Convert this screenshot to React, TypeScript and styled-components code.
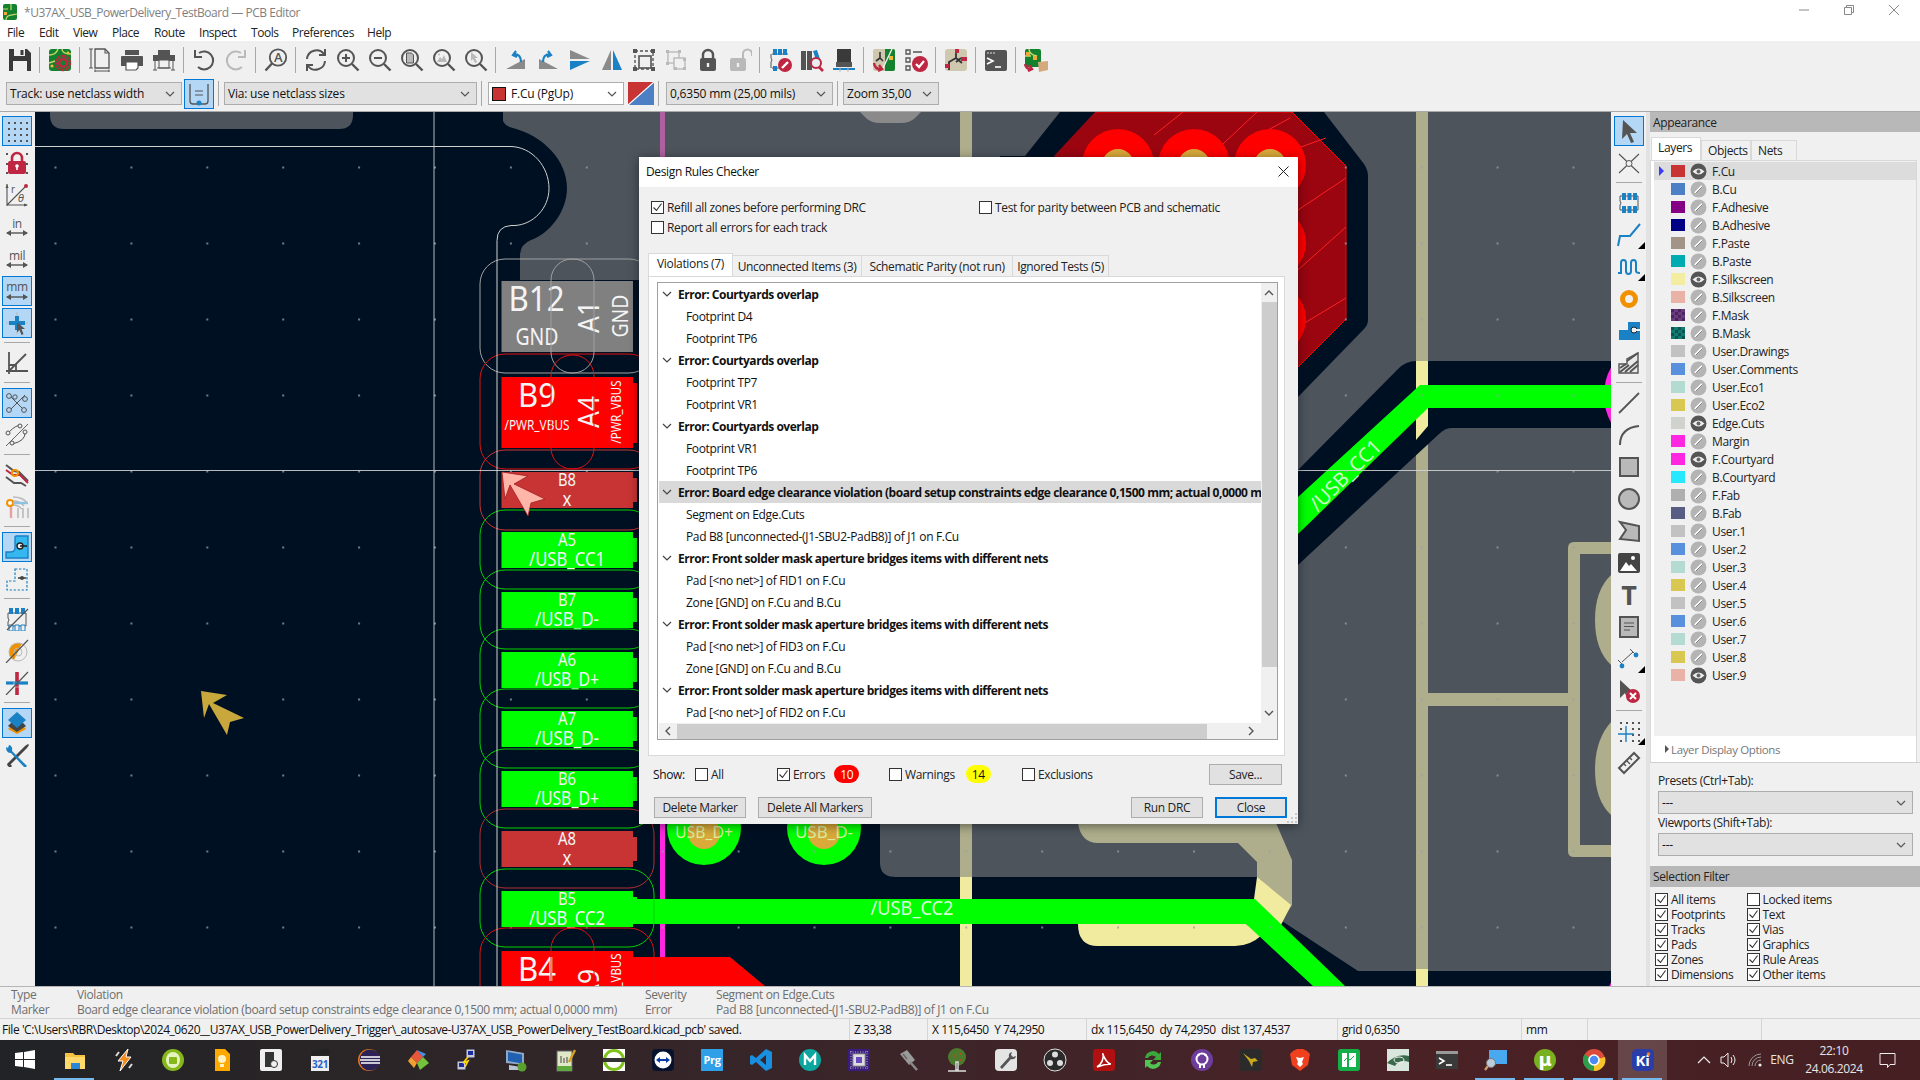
import React from 'react'
import styled, { createGlobalStyle } from 'styled-components'

const UI = `"Open Sans", "Noto Sans", sans-serif`
const D = '#545454'
const B = '#1a81c4'
const R = '#bf2641'
const O = '#f29100'
const L = '#b9b9b9'

const GlobalStyle = createGlobalStyle`
html, body { margin: 0; padding: 0; background: #f0f0f0; overflow: hidden; }
#root { width: 1920px; height: 1080px; }
* { box-sizing: border-box; }
`

const Root = styled.div`
position: relative;
display: flex;
flex-direction: column;
width: 1920px;
height: 1080px;
overflow: hidden;
font-family: ${UI};
font-size: 12px;
letter-spacing: -0.35px;
color: #111;
`
const TitleBar = styled.div`
display: flex;
align-items: center;
height: 24px;
background: #fff;
color: #7f7f7f;
padding: 0 4px 0 3px;
letter-spacing: -0.46px;
`
const AppLogo = styled.div`
display: flex;
margin-right: 7px;
`
const WinControls = styled.div`
display: flex;
margin-left: auto;
`
const WinControl = styled.div`
display: flex;
align-items: center;
justify-content: center;
width: 45px;
height: 20px;
margin-top: -4px;
`
const MenuBar = styled.div`
display: flex;
align-items: center;
height: 17px;
background: #fff;
padding-left: 7px;
letter-spacing: -0.45px;
`
const MenuItem = styled.span<{ $w: number }>`
width: ${p => p.$w}px;
font-size: 12px;
color: #222;
`
const TopToolbar = styled.div`
display: flex;
align-items: center;
height: 37px;
padding: 0 0 0 4px;
background: #f0f0f0;
`
const ToolBtn = styled.div<{ $active?: boolean; $corner?: boolean }>`
position: relative;
flex: none;
display: flex;
align-items: center;
justify-content: center;
width: ${p => (p.$active ? 30 : 32)}px;
height: ${p => (p.$active ? 30 : 32)}px;
margin: ${p => (p.$active ? '1px' : '0')};
${p => p.$active && `
  background: #b3d7f5;
  border: 1px solid #0078d7;
`}
${p => p.$corner && `
  &::after {
    content: '';
    position: absolute;
    right: 0;
    bottom: 2px;
    border-left: 7px solid transparent;
    border-bottom: 7px solid #000;
  }
`}
`
const SepV = styled.div`
flex: none;
width: 1px;
height: 26px;
margin: 0 4px 0 3px;
background: #a8a8a8;
`
const SepH = styled.div`
flex: none;
width: 26px;
height: 1px;
margin: 3px 0 4px 3px;
background: #a8a8a8;
`
const ComboBar = styled.div`
display: flex;
align-items: center;
height: 33px;
padding-left: 6px;
padding-bottom: 2px;
background: #f0f0f0;
`
const Combo = styled.div<{ $w?: number; $white?: boolean }>`
display: flex;
align-items: center;
flex: none;
width: ${p => (p.$w ? `${p.$w}px` : '100%')};
height: 23px;
padding: 0 6px 0 3px;
background: ${p => (p.$white ? '#fff' : '#e1e1e1')};
border: 1px solid #adadad;
color: #111;
letter-spacing: -0.2px;
svg:last-child { margin-left: auto; }
`
const LayerSwatch = styled.span`
width: 14px;
height: 14px;
margin-right: 5px;
background: #c83434;
border: 1px solid #111;
`
const PairBtn = styled.div`
display: flex;
flex: none;
margin: 0 0 0 4px;
`
const ToggleBox = styled.div`
display: flex;
align-items: center;
justify-content: center;
flex: none;
width: 30px;
height: 30px;
margin-left: 2px;
background: #b3d7f5;
border: 1px solid #0078d7;
`
const BarSep = styled.div<{ $r?: number }>`
flex: none;
width: 1px;
height: 25px;
margin: 0 ${p => p.$r ?? 5}px 0 4px;
background: #a8a8a8;
`
const Main = styled.div`
display: flex;
height: 875px;
border-top: 1px solid #a9a9a9;
`
const SideToolbar = styled.div<{ $pad: number }>`
display: flex;
flex-direction: column;
flex: none;
width: 35px;
padding-top: 3px;
padding-left: ${p => p.$pad}px;
background: #f0f0f0;
`
const CanvasPane = styled.div`
flex: none;
width: 1576px;
height: 874px;
background: #001023;
svg { display: block; }
`
const Sash = styled.div`
flex: none;
width: 4px;
background: #e2e2e2;
`
const RightPanel = styled.div`
display: flex;
flex-direction: column;
flex: none;
width: 270px;
background: #f0f0f0;
`
const PanelHead = styled.div<{ $h: number }>`
display: flex;
align-items: center;
flex: none;
height: ${p => p.$h}px;
padding-left: 3px;
background: #b8b8b8;
color: #222;
`
const PanelTabs = styled.div`
display: flex;
align-items: flex-end;
height: 28px;
padding: 0 0 0 1px;
`
const PanelTab = styled.div<{ $w: number; $on?: boolean }>`
display: flex;
align-items: center;
width: ${p => p.$w}px;
height: ${p => (p.$on ? 23 : 20)}px;
padding: 0 0 ${p => (p.$on ? 3 : 0)}px 6px;
background: ${p => (p.$on ? '#fff' : '#f0f0f0')};
border: 1px solid #d9d9d9;
border-bottom: none;
color: #222;
`
const LayerBox = styled.div`
display: flex;
flex-direction: column;
height: 602px;
margin-right: 3px;
padding: 0 0 0 3px;
background: #fff;
border-left: 1px solid #d9d9d9;
border-top: 1px solid #d9d9d9;
border-right: 1px solid #d9d9d9;
`
const LayerList = styled.div`
flex: none;
height: 575px;
background: #f0f0f0;
padding-top: 1px;
`
const LayerRow = styled.div<{ $sel?: boolean }>`
display: flex;
align-items: center;
height: 18px;
background: ${p => (p.$sel ? '#dcdcdc' : 'transparent')};
`
const LayerMark = styled.span<{ $on?: boolean }>`
flex: none;
width: 6px;
margin: 0 6px 0 5px;
height: 0;
border-top: 5px solid transparent;
border-bottom: 5px solid transparent;
border-left: 5px solid ${p => (p.$on ? '#3a3aff' : 'transparent')};
`
const Swatch = styled.span<{ $c: string; $c2?: string }>`
flex: none;
width: 14px;
height: 12px;
background: ${p => (p.$c2 ? `repeating-conic-gradient(${p.$c} 0 25%, ${p.$c2} 0 50%) 0 0 / 7px 6px` : p.$c)};
`
const EyeSlot = styled.span`
display: flex;
flex: none;
margin-left: 5px;
`
const LayerName = styled.span`
margin-left: 5px;
color: #222;
`
const DisplayOptions = styled.div`
display: flex;
align-items: center;
flex: 1;
padding-left: 11px;
color: #777;
font-size: 11.5px;
`
const SmallArrow = styled.span`
width: 0;
height: 0;
margin-right: 2px;
border-top: 4px solid transparent;
border-bottom: 4px solid transparent;
border-left: 4px solid #555;
`
const PresetBox = styled.div`
flex: none;
height: 104px;
padding: 11px 7px 0 8px;
border-top: 1px solid #d0d0d0;
`
const PresetLabel = styled.div`
height: 17px;
line-height: 14px;
color: #222;
`
const PresetGap = styled.div`
height: 2px;
`
const FilterGrid = styled.div`
display: grid;
grid-template-columns: 91.5px 1fr;
grid-auto-rows: 15px;
padding: 5px 0 0 5px;
`
const CheckLabel = styled.label`
display: flex;
align-items: center;
gap: 3px;
color: #222;
white-space: nowrap;
`
const Box = styled.span`
display: flex;
align-items: center;
justify-content: center;
flex: none;
width: 13px;
height: 13px;
background: #fff;
border: 1px solid #333;
`
const MessagePanel = styled.div`
display: flex;
height: 32px;
padding: 0 0 0 11px;
background: #f0f0f0;
border-top: 1px solid #b5b5b5;
color: #6e6e6e;
`
const MsgCol = styled.div<{ $w: number }>`
width: ${p => p.$w}px;
line-height: 15px;
white-space: nowrap;
`
const StatusBar = styled.div`
display: flex;
align-items: stretch;
height: 22px;
border-top: 1px solid #d5d5d5;
background: #f0f0f0;
letter-spacing: -0.44px;
`
const StatusCell = styled.div<{ $w?: number; $pad?: number }>`
display: flex;
align-items: center;
flex: none;
width: ${p => (p.$w ? `${p.$w}px` : 'auto')};
padding-left: ${p => p.$pad ?? 4}px;
border-right: 1px solid #d5d5d5;
white-space: pre;
overflow: hidden;
`
const Taskbar = styled.div`
display: flex;
height: 40px;
background: linear-gradient(90deg, #212326 0%, #2b2527 20%, #3b2529 45%, #4a2226 75%, #451f22 100%);
color: #e6e6e6;
`
const StartBtn = styled.div`
display: flex;
align-items: center;
justify-content: center;
flex: none;
width: 50px;
`
const TaskIcon = styled.div<{ $open?: boolean; $cur?: boolean }>`
position: relative;
display: flex;
align-items: center;
justify-content: center;
flex: none;
width: 49px;
background: ${p => (p.$cur ? 'rgba(255,255,255,0.17)' : 'transparent')};
${p => p.$open && `
  &::after {
    content: '';
    position: absolute;
    left: 4px;
    right: 5px;
    bottom: 0;
    height: 2px;
    background: #76b9ed;
  }
`}
`
const Tray = styled.div`
display: flex;
margin-left: auto;
padding-right: 18px;
`
const TraySlot = styled.div<{ $w: number }>`
display: flex;
flex-direction: column;
align-items: center;
justify-content: center;
width: ${p => p.$w}px;
font-size: 12px;
line-height: 18px;
`
const Dialog = styled.div`
position: absolute;
left: 639px;
top: 157px;
display: flex;
flex-direction: column;
width: 659px;
height: 667px;
background: #f0f0f0;
box-shadow: 0 2px 10px rgba(0, 0, 0, 0.45);
`
const DialogTitle = styled.div`
display: flex;
align-items: center;
justify-content: space-between;
height: 30px;
padding: 0 9px 2px 7px;
background: #fff;
color: #111;
`
const OptionGrid = styled.div`
display: grid;
grid-template-columns: 328px 1fr;
grid-auto-rows: 20px;
height: 50px;
padding: 10px 0 0 12px;
`
const TabRow = styled.div`
display: flex;
align-items: flex-end;
height: 23px;
margin-top: 16px;
padding-left: 9px;
`
const Tab = styled.div<{ $w: number; $on?: boolean }>`
display: flex;
align-items: center;
justify-content: center;
width: ${p => p.$w}px;
height: ${p => (p.$on ? 23 : 21)}px;
padding-bottom: ${p => (p.$on ? 3 : 0)}px;
background: ${p => (p.$on ? '#fff' : '#f0f0f0')};
border: 1px solid #d9d9d9;
border-bottom: none;
border-left: ${p => (p.$on ? '1px solid #d9d9d9' : 'none')};
white-space: nowrap;
color: #222;
`
const TabPane = styled.div`
height: 480px;
margin: 0 13px 0 9px;
padding: 5px 6px 15px 8px;
background: #fff;
border: 1px solid #d9d9d9;
`
const Tree = styled.div`
display: flex;
flex-direction: column;
height: 458px;
border: 1px solid #a0a0a0;
`
const TreeBody = styled.div`
display: flex;
height: 440px;
overflow: hidden;
`
const TreeRows = styled.div`
flex: none;
width: 602px;
margin-left: 1px;
overflow: hidden;
`
const TreeRow = styled.div<{ $head?: boolean; $sel?: boolean }>`
display: flex;
align-items: center;
height: 22px;
padding-left: ${p => (p.$head ? 3 : 27)}px;
background: ${p => (p.$sel ? '#d9d9d9' : 'transparent')};
font-weight: ${p => (p.$head ? 700 : 400)};
letter-spacing: ${p => (p.$head ? '-0.47px' : '-0.35px')};
white-space: nowrap;
color: #111;
svg { flex: none; margin-right: 6px; }
`
const VScroll = styled.div`
position: relative;
flex: none;
width: 17px;
background: #f0f0f0;
`
const VThumb = styled.div`
height: 365px;
margin: 19px 1px 0 1px;
background: #cdcdcd;
`
const ScrollArrowBox = styled.div<{ $top?: number; $bottom?: number }>`
position: absolute;
display: flex;
left: 3px;
${p => (p.$top !== undefined ? `top: ${p.$top}px;` : '')}
${p => (p.$bottom !== undefined ? `bottom: ${p.$bottom}px;` : '')}
`
const HScroll = styled.div`
display: flex;
align-items: center;
height: 16px;
margin-left: 1px;
padding-left: 5px;
background: #f0f0f0;
`
const HThumb = styled.div`
width: 530px;
height: 15px;
margin: 0 40px 0 5px;
background: #cdcdcd;
`
const ShowRow = styled.div`
display: flex;
align-items: center;
height: 22px;
margin-top: 7px;
padding: 0 16px 0 14px;
`
const ShowSlot = styled.div<{ $w: number }>`
display: flex;
align-items: center;
flex: none;
width: ${p => p.$w}px;
`
const Badge = styled.span<{ $bg: string; $fg: string; $ml: number }>`
display: flex;
align-items: center;
justify-content: center;
width: 25px;
height: 18px;
margin-left: ${p => p.$ml}px;
background: ${p => p.$bg};
color: ${p => p.$fg};
border-radius: 9px;
`
const ButtonRow = styled.div`
display: flex;
align-items: center;
gap: 12px;
height: 21px;
margin-top: 12px;
padding: 0 11px 0 15px;
`
const DlgButton = styled.div<{ $w: number; $main?: boolean; $auto?: boolean }>`
display: flex;
align-items: center;
justify-content: center;
flex: none;
width: ${p => p.$w}px;
height: 21px;
${p => p.$auto && 'margin-left: auto;'}
background: #e1e1e1;
border: ${p => (p.$main ? '2px solid #0078d7' : '1px solid #adadad')};
color: #222;
`
const Grip = styled.div`
position: absolute;
right: 1px;
bottom: 1px;
display: flex;
`

const Mag = ({ children }: { children?: React.ReactNode }) => (
    <>
        <circle cx="10" cy="10" r="8" fill="none" stroke={D} strokeWidth="2" />
        <path d="M16 16l6.5 6.5" stroke={D} strokeWidth="2.4" />
        {children}
    </>
)

const icons: Record<string, React.ReactNode> = {
    save: <><path d="M1 1h18l4 4v18H1z" fill="#3a3a3a" /><path d="M6 1h11v7H6z" fill="#f0f0f0" /><path d="M12.5 2h3v5h-3z" fill="#3a3a3a" /><path d="M5 13h14v10H5z" fill="#f0f0f0" /></>,
    board: <><rect x="1" y="1" width="22" height="22" rx="3" fill="#14812e" /><path d="M1 7c6 0 8-3 9-6M1 15l6-2M14 1c0 4 3 5 9 5" stroke="#c4d86a" strokeWidth="1.4" fill="none" /><circle cx="4" cy="18" r="1.6" fill="#f2b83a" /><circle cx="20" cy="5" r="1.4" fill="#f2b83a" /><circle cx="15" cy="15" r="7" fill="none" stroke={R} strokeWidth="2.6" strokeDasharray="2.2 1.2" /><circle cx="15" cy="15" r="3.8" fill="none" stroke={R} strokeWidth="2.6" /></>,
    page: <><path d="M7 1h10l4 4v15H7z" fill="none" stroke={D} strokeWidth="1.3" /><path d="M17 1v4h4M3 1v19M1 1h4M1 20h4M7 23h14M7 21.5v3M21 21.5v3" fill="none" stroke={D} strokeWidth="1.1" /></>,
    print: <><path d="M5 2h14v5H5z" fill={D} /><path d="M2 8h20q1 0 1 1v9h-5v-4H6v4H1V9q0-1 1-1z" fill={D} /><path d="M6 14h12v6l-2 2H6z" fill="#fff" stroke={D} strokeWidth="1.2" /></>,
    plot: <><path d="M6 2h12v5H6z" fill={D} /><path d="M1 7h22v6H1z" fill={D} /><path d="M7 12h10v8H7z" fill="#f0f0f0" stroke={D} /><path d="M3 13v9M21 13v9M1 22h4M19 22h4M5 20h14" fill="none" stroke={D} /></>,
    undo: <><path d="M7 5a9 9 0 1 1-1 14" fill="none" stroke={D} strokeWidth="2" /><path d="M3 2v7h7" fill="none" stroke={D} strokeWidth="2" /></>,
    redo: <><path d="M17 5a9 9 0 1 0 1 14" fill="none" stroke={L} strokeWidth="2" /><path d="M21 2v7h-7" fill="none" stroke={L} strokeWidth="2" /></>,
    find: <><circle cx="14" cy="9.5" r="8.2" fill="none" stroke={D} strokeWidth="1.8" /><path d="M8 15.5L1.5 22.5" stroke={D} strokeWidth="2.4" /><text x="14" y="14" textAnchor="middle" fontSize="13" fontFamily="Open Sans" fontWeight="600" fill={D}>A</text></>,
    refresh: <><path d="M3 11a9.5 9.5 0 0 1 17-5M21 13a9.5 9.5 0 0 1-17 5" fill="none" stroke={D} strokeWidth="2" /><path d="M21 1v6h-6M3 23v-6h6" fill="none" stroke={D} strokeWidth="2" /></>,
    zoomIn: <Mag><path d="M6 10h8M10 6v8" stroke={D} strokeWidth="2" /></Mag>,
    zoomOut: <Mag><path d="M6 10h8" stroke={D} strokeWidth="2" /></Mag>,
    zoomFit: <Mag><path d="M6.5 5h5l2 2v8h-7z" fill={L} stroke={D} strokeWidth="1" /></Mag>,
    zoomObj: <Mag><path d="M5 14l3-5 2 2 2-4 3 7z" fill={L} /><circle cx="7" cy="6.5" r="1" fill={L} /></Mag>,
    zoomSel: <Mag><path d="M7 4l7 6h-3l2 4-2 1-2-4-2 2z" fill={L} /></Mag>,
    rotCcw: <><path d="M2 21L21 11v10z" fill="#8a8a8a" /><path d="M12 3l-3 4 4 2M10 6c5 0 7 3 7 8" fill="none" stroke={B} strokeWidth="2.2" /></>,
    rotCw: <><path d="M22 21L3 11v10z" fill="#8a8a8a" /><path d="M12 3l3 4-4 2M14 6c-5 0-7 3-7 8" fill="none" stroke={B} strokeWidth="2.2" /></>,
    mirrorH: <><path d="M2 2l20 9H2z" fill="#8a8a8a" /><path d="M2 22l20-9H2z" fill={B} /></>,
    mirrorV: <><path d="M11 2v20H2z" fill="#8a8a8a" /><path d="M13 2v20h9z" fill={B} /></>,
    group: <><rect x="3" y="3" width="18" height="18" fill="none" stroke={D} strokeWidth="1.4" strokeDasharray="3 2" /><rect x="7" y="8" width="12" height="12" fill="#f0f0f0" stroke={D} strokeWidth="1.6" /><path d="M1 1h4v4H1zM19 1h4v4h-4zM1 19h4v4H1zM19 19h4v4h-4z" fill={D} /></>,
    ungroup: <><rect x="4" y="4" width="11" height="11" fill="none" stroke={L} strokeWidth="1.4" /><rect x="10" y="10" width="11" height="11" fill="#f0f0f0" stroke={L} strokeWidth="1.4" /><path d="M2 2h3v3H2zM14 2h3v3h-3zM2 14h3v3H2zM19 10h3v3h-3zM10 19h3v3h-3zM19 19h3v3h-3z" fill={L} /></>,
    lock: <><path d="M7 11V7a5 5 0 0 1 10 0v4" fill="none" stroke={D} strokeWidth="2.4" /><rect x="4" y="10" width="16" height="13" rx="2" fill={D} /><path d="M12 15v4" stroke="#f0f0f0" strokeWidth="2.4" /></>,
    unlock: <><path d="M15 11V6a4.5 4.5 0 0 1 9 0v2" fill="none" stroke={L} strokeWidth="2" /><rect x="2" y="10" width="16" height="13" rx="2" fill={L} /><path d="M10 15v4" stroke="#f0f0f0" strokeWidth="2.4" /></>,
    fpEdit: <><path d="M4 6h16M4 20h11" stroke={D} strokeWidth="1" /><path d="M3 6v4q2 2 0 4v6" fill="none" stroke={D} /><path d="M5 1h4v6H5zM10 1h4v6h-4zM15 1h4v6h-4zM5 18h4v5H5z" fill={B} /><circle cx="17" cy="17" r="7" fill={R} /><path d="M14 20l6-6" stroke="#fff" strokeWidth="2.4" /></>,
    fpBrowse: <><path d="M1 3h5v19H1zM7 3h5v19H7z" fill={D} /><path d="M13 3l4-1 4 12-4 1z" fill={B} /><circle cx="16" cy="15" r="5" fill="#e8eef2" stroke={R} strokeWidth="2" /><path d="M19 19l4 4" stroke={R} strokeWidth="2.6" /></>,
    chip3d: <><path d="M5 1h14v13H5z" fill="#3a3a3a" /><path d="M4 14h16v5H4z" fill={D} /><path d="M1 20h22v2H1z" fill={B} /><path d="M8 19v5M16 19v5" stroke={L} /></>,
    netUpdate: <><rect x="1" y="1" width="22" height="22" rx="2" fill="#d0c8ae" /><path d="M13 1h8q2 0 2 2v18q0 2-2 2h-8z" fill="#14812e" /><path d="M8 4v6l-4 3M8 10l3 3" stroke="#333" strokeWidth="1.6" fill="none" /><path d="M20 1L11 20" stroke="#f0f0f0" strokeWidth="1.4" /><rect x="17" y="8" width="4" height="4" fill="#f2b83a" /><path d="M2 15q1 7 8 6m-3-4l3 4-4 2" fill="none" stroke={R} strokeWidth="2.4" /></>,
    drc: <><path d="M2 2h4v4H2zM2 10h4v4H2zM2 18h4v4H2z" fill="none" stroke={D} strokeWidth="1.3" /><path d="M9 4h9" stroke={D} strokeWidth="1.5" /><circle cx="16" cy="16" r="8" fill={R} /><path d="M12 16l3 3 5-6" fill="none" stroke="#fff" strokeWidth="2.2" /></>,
    sch: <><rect x="1" y="1" width="22" height="22" rx="3" fill="#d0c8ae" /><path d="M12 2v8l-7 4v8M12 10l6 5M12 14l5-4" stroke="#333" strokeWidth="1.8" fill="none" /><path d="M11 1h4v4h-4zM17 9h6v4h-6zM1 16h4v4H1z" fill={R} /></>,
    script: <><rect x="1" y="2" width="22" height="21" rx="2" fill={D} /><path d="M3 5h2M6 5h2M9 5h2" stroke="#ddd" /><path d="M3 10l6 3-6 3" fill="none" stroke="#fff" strokeWidth="1.6" /><path d="M11 19h6" stroke="#fff" strokeWidth="1.6" /></>,
    fpUpdate: <><rect x="1" y="1" width="16" height="18" rx="2" fill="#14812e" /><path d="M5 1c0 4 2 6 8 7M1 8h6" stroke="#c4d86a" strokeWidth="1.4" fill="none" /><rect x="2" y="4" width="4" height="4" fill="#f2a83a" /><rect x="9" y="8" width="4" height="4" fill="#f2a83a" /><path d="M14 14l10-1v9l-9 2z" fill="#d4aa7d" /><path d="M1 16q1 6 7 5m-3-4l3 4-4 2" fill="none" stroke={R} strokeWidth="2.4" /></>,
    gridDots: <><path d="M3 3h2v2H3zM9 3h2v2H9zM15 3h2v2h-2zM21 3h2v2h-2zM3 9h2v2H3zM9 9h2v2H9zM15 9h2v2h-2zM21 9h2v2h-2zM3 15h2v2H3zM9 15h2v2H9zM15 15h2v2h-2zM21 15h2v2h-2zM3 21h2v2H3zM9 21h2v2H9zM15 21h2v2h-2zM21 21h2v2h-2z" fill={D} /></>,
    gridLock: <><path d="M1 2h2v2H1zM1 12h2v2H1zM1 21h2v2H1zM21 2h2v2h-2zM21 12h2v2h-2zM21 21h2v2h-2z" fill={D} /><path d="M7 11V7a5 5 0 0 1 10 0v4" fill="none" stroke={R} strokeWidth="2.6" /><rect x="3" y="10" width="18" height="13" rx="2" fill={R} /><circle cx="12" cy="15" r="1.8" fill="#fff" /><path d="M12 15v4" stroke="#fff" strokeWidth="1.6" /></>,
    polar: <><path d="M2 23V1M2 22h20M2 22L20 4" fill="none" stroke={D} strokeWidth="1.1" /><path d="M2 1l-1.5 4h3zM23 22l-4-1.5v3z" fill={D} /><circle cx="21" cy="3" r="2" fill={R} /><text x="6" y="10" fontSize="10" fontFamily="Open Sans" fill={D}>r</text><text x="13" y="19" fontSize="10" fontStyle="italic" fontFamily="DejaVu Sans" fill={D}>θ</text></>,
    inch: <><text x="12" y="13" textAnchor="middle" fontSize="12" fontFamily="Open Sans" fill={D}>in</text><path d="M2 18h20" stroke={D} strokeWidth="1.4" /><path d="M1 18l5-3v6zM23 18l-5-3v6z" fill={D} /></>,
    mil: <><text x="12" y="13" textAnchor="middle" fontSize="12" fontFamily="Open Sans" fill={D}>mil</text><path d="M2 18h20" stroke={D} strokeWidth="1.4" /><path d="M1 18l5-3v6zM23 18l-5-3v6z" fill={D} /></>,
    mm: <><text x="12" y="12" textAnchor="middle" fontSize="12" fontFamily="Open Sans" fill={D}>mm</text><path d="M2 18h20" stroke={D} strokeWidth="1.4" /><path d="M1 18l5-3v6zM23 18l-5-3v6z" fill={D} /></>,
    cursor: <><path d="M12 1v22M1 12h22" stroke={L} strokeWidth="1" /><path d="M4 12h16M12 5v14" stroke={B} strokeWidth="4" /><path d="M12 11l8 7h-3.5l2 5-2 1-2-5-2.5 2.5z" fill={D} /></>,
    angle: <><path d="M4 1v22M1 20h22M4 20L21 3M4 14h7v6" fill="none" stroke={D} strokeWidth="1.8" /></>,
    rats: <><path d="M4 4l16 16M20 4L4 20M4 4l8 8" stroke={D} strokeWidth="1" /><circle cx="4" cy="5" r="2.4" fill="#b3d7f5" stroke={D} /><circle cx="20" cy="8" r="2.4" fill="#b3d7f5" stroke={D} /><circle cx="4" cy="19" r="2.4" fill="#b3d7f5" stroke={D} /><circle cx="19" cy="19" r="2.4" fill="#b3d7f5" stroke={D} /><circle cx="10" cy="6" r="2.2" fill="#b3d7f5" stroke={D} /></>,
    ratsCurve: <><path d="M1 23L23 1" stroke={D} strokeWidth=".9" /><path d="M4 9q8-8 11-6M7 21q14-3 13-12" fill="none" stroke={D} /><circle cx="3" cy="10" r="2" fill="#f0f0f0" stroke={D} /><circle cx="15" cy="3" r="2" fill="#f0f0f0" stroke={D} /><circle cx="7" cy="20" r="2" fill="#f0f0f0" stroke={D} /><circle cx="20" cy="9" r="2" fill="#f0f0f0" stroke={D} /></>,
    netHi: <><path d="M1 2l8 6 5 1 9 9" fill="none" stroke={D} strokeWidth="2" /><path d="M1 7l7 5h7l8 8" fill="none" stroke={R} strokeWidth="2" /><path d="M1 14l8 6h7l5 3" fill="none" stroke={D} strokeWidth="2" /><circle cx="10" cy="10" r="3" fill="none" stroke={O} strokeWidth="2" /></>,
    netDim: <><path d="M8 2q10 0 14 6M8 6q7 0 11 5M8 10q5 0 9 4" fill="none" stroke={L} strokeWidth="1.6" /><path d="M13 13v10M18 13v10M23 13v10" stroke={L} strokeWidth="1.6" /><path d="M6 8v15" stroke="#e9a0a0" strokeWidth="2.4" /><circle cx="5" cy="8" r="3" fill="#fff" stroke={O} strokeWidth="2" /><path d="M8 8h15" stroke="#8fc1e0" strokeWidth="2.4" /></>,
    padFill: <><path d="M11 1h12v22H1v-6h4q5 0 5-4V2z" fill="#35b8f0" stroke={B} strokeWidth="1.4" /><circle cx="15" cy="11" r="3" fill="#f0f0f0" stroke="#222" strokeWidth="1.4" /><path d="M15 11h7" stroke="#222" strokeWidth="1.6" /></>,
    padLine: <><path d="M10 2h12v21H2v-9h8z" fill="none" stroke={B} strokeWidth="1.2" strokeDasharray="2.4 1.6" /><circle cx="17" cy="11" r="2" fill="#444" /><path d="M13 11h8" stroke="#444" strokeWidth="1.6" /></>,
    chipSlash: <><path d="M3 6h18M3 19h18M3 6v5q2 2 0 4v4M21 6v13" fill="none" stroke={D} /><path d="M4 1h4v6H4zM10 1h4v6h-4zM16 1h4v6h-4z" fill={B} /><path d="M4 18h4v6H4zM10 18h4v6h-4zM16 18h4v6h-4z" fill="#f0f0f0" stroke={B} /><path d="M2 23L23 2" stroke={D} strokeWidth="1.2" /></>,
    viaSlash: <><path d="M12 4a9 9 0 0 0-3 17L17 4z" fill={O} /><circle cx="13" cy="13" r="9" fill="none" stroke={L} /><circle cx="13" cy="13" r="4" fill="none" stroke={L} /><path d="M1 24L23 1" stroke={D} strokeWidth="1.2" /></>,
    trackSlash: <><path d="M12 1v23" stroke={R} strokeWidth="3.6" /><path d="M1 12h22" stroke={B} strokeWidth="3.2" /><path d="M9 6v18M1 16h22" stroke="#f0f0f0" strokeWidth=".5" /><path d="M1 24L23 1" stroke={D} strokeWidth="1.2" /></>,
    layers: <><path d="M12 9l9 9-9 5-9-5z" fill={O} /><path d="M12 6l9 9-9 6-9-6z" fill="#444" /><path d="M12 1l9 8-9 8-9-8z" fill={B} /></>,
    tools: <><path d="M2 21L20 3l3-2 1 1-2 3-18 18z" fill="#444" /><path d="M22 23L7 8q1-5-3-6l-1 3-2-1q0 6 5 6l14 15z" fill={B} /><path d="M3 21l3 3" stroke="#444" strokeWidth="3" /></>,
    arrow: <path d="M6 1l14 13h-7l4 9-3 1-4-9-5 5z" fill={D} />,
    cross: <><path d="M2 3l20 19M22 3L2 22" stroke={D} strokeWidth="1.1" /><circle cx="12" cy="12.5" r="3" fill="#f0f0f0" stroke={D} /></>,
    fp: <><path d="M3 5h18v14H3v-5q2-2 0-4z" fill="none" stroke={D} /><path d="M5 2h4v7H5zM10.5 2h4v7h-4zM16 2h4v7h-4zM5 15h4v7H5zM10.5 15h4v7h-4zM16 15h4v7h-4z" fill={B} /></>,
    track: <path d="M1 23l2-10h10L23 1" fill="none" stroke={B} strokeWidth="2" />,
    tune: <path d="M1 18h3V8q0-3 2.5-3T9 8v8q0 3 2.5 3T14 16V8q0-3 2.5-3T19 8v8q0 2 4 2" fill="none" stroke={B} strokeWidth="2" />,
    via: <circle cx="12" cy="12" r="6.5" fill="none" stroke={O} strokeWidth="5" />,
    zone: <><path d="M11 3h12v18H2V11h9z" fill={B} /><circle cx="17" cy="11" r="3" fill="#f0f0f0" stroke="#222" strokeWidth="1" /><path d="M17 11h6" stroke="#f0f0f0" strokeWidth="2" /></>,
    hatch: <><path d="M21 2v20H2v-9h8V8l11-6z" fill="#e9e9e9" stroke={D} strokeWidth="1.4" /><path d="M3 17l6-4M3 21l9-7M8 21l13-11M13 21l8-7M10 10l11-8" stroke={D} strokeWidth="2" /></>,
    line: <path d="M2 22L22 2" stroke={D} strokeWidth="1.8" />,
    arc: <path d="M3 22q0-17 19-19" fill="none" stroke={D} strokeWidth="2" />,
    rect: <rect x="3" y="3" width="18" height="18" fill={L} stroke={D} strokeWidth="2" />,
    circle: <circle cx="12" cy="12" r="10" fill={L} stroke={D} strokeWidth="2" />,
    poly: <path d="M3 3l19 4v15l-19-2 6-9z" fill={L} stroke={D} strokeWidth="2" />,
    image: <><rect x="1" y="2" width="22" height="20" rx="2" fill="#444" /><circle cx="16" cy="7" r="2" fill="#fff" /><path d="M3 20l6-9 3 4 2-2 6 7z" fill="#fff" /></>,
    textT: <text x="12" y="22" textAnchor="middle" fontSize="27" fontWeight="700" fontFamily="Open Sans" fill={D}>T</text>,
    textBox: <><rect x="3" y="2" width="18" height="20" fill={L} stroke={D} strokeWidth="2" /><path d="M7 8h10M7 11.5h10M7 15h6" stroke={D} strokeWidth="1.2" /></>,
    dim: <><path d="M5 15L16 5M1 13l6 6M13 2l6 6" stroke={D} strokeWidth="1" /><circle cx="19" cy="8" r="2.4" fill={B} /><circle cx="5" cy="19" r="2.4" fill={B} /></>,
    del: <><path d="M3 1l13 12h-6l3 8-2 1-3-8-5 5z" fill={D} /><circle cx="16" cy="17" r="7" fill={R} /><path d="M13 14l6 6M19 14l-6 6" stroke="#fff" strokeWidth="2" /></>,
    origin: <><path d="M3 3h2v2H3zM9 3h2v2H9zM15 3h2v2h-2zM21 3h2v2h-2zM3 9h2v2H3zM15 9h2v2h-2zM21 9h2v2h-2zM3 21h2v2H3zM15 21h2v2h-2zM21 21h2v2h-2zM15 15h2v2h-2zM21 15h2v2h-2z" fill={D} /><path d="M1 15h16M9 7v16" stroke={B} strokeWidth="1.4" /></>,
    ruler: <><path d="M2 17L17 2l5 5L7 22z" fill="none" stroke={D} strokeWidth="2" /><path d="M7 13l2 2M10 10l3 3M13 7l2 2" stroke={D} strokeWidth="1.4" /></>,
    routeBtn: <><path d="M3 2v17q0 3 3 3h12q3 0 3-3V2" fill="none" stroke={D} strokeWidth="1.3" /><path d="M8 9h8M8 13h8" stroke={D} /><circle cx="12" cy="21" r="2.5" fill={B} /></>,
    layerPair: <><path d="M0 0h26L0 32z" fill="#c83434" /><path d="M26 0v32H0z" fill="#4d7fc4" /><path d="M0 32L26 0" stroke="#fff" strokeWidth="1.5" /></>,
}

const Icon = ({ n, s = 24 }: { n: string; s?: number }) => (
    <svg width={s} height={s} viewBox="0 0 24 24">{icons[n]}</svg>
)

const Chevron = ({ c = '#444', s = 10 }: { c?: string; s?: number }) => (
    <svg width={s} height={s} viewBox="0 0 10 10"><path d="M1 3l4 4 4-4" fill="none" stroke={c} strokeWidth="1.2" /></svg>
)

const Tick = () => (
    <svg width="11" height="11" viewBox="0 0 11 11"><path d="M1.5 5.5l3 3 5-7" fill="none" stroke="#333" strokeWidth="1.1" /></svg>
)

const Check = ({ on, label }: { on?: boolean; label: string }) => (
    <CheckLabel><Box>{on && <Tick />}</Box>{label}</CheckLabel>
)

const Eye = ({ on }: { on?: boolean }) => (
    <svg width="17" height="17" viewBox="0 0 17 17">
        <circle cx="8.5" cy="8.5" r="8" fill={on ? '#555' : '#b4b4b4'} />
        {on ? (
            <>
                <path d="M2.5 8.5q6-6 12 0q-6 6-12 0z" fill="#eee" />
                <circle cx="8.5" cy="8.5" r="2" fill="#666" />
            </>
        ) : (
            <>
                <path d="M5 12l7-7" stroke="#fff" strokeWidth="2" />
                <path d="M5.5 12.5l7-7" stroke="#666" strokeWidth=".8" />
            </>
        )}
    </svg>
)

const topTools = ['save', '|', 'board', '|', 'page', 'print', 'plot', '|', 'undo', 'redo', '|', 'find', '|', 'refresh', 'zoomIn', 'zoomOut', 'zoomFit', 'zoomObj', 'zoomSel', '|', 'rotCcw', 'rotCw', 'mirrorH', 'mirrorV', 'group', 'ungroup', 'lock', 'unlock', '|', 'fpEdit', 'fpBrowse', 'chip3d', '|', 'netUpdate', 'drc', '|', 'sch', '|', 'script', '|', 'fpUpdate']

const leftTools = ['*gridDots', 'gridLock', 'polar', 'inch', 'mil', '*mm', '*cursor', '|', 'angle', '|', '*rats', 'ratsCurve', '|', 'netHi', 'netDim', '|', '*padFill', 'padLine', '|', 'chipSlash', 'viaSlash', 'trackSlash', '|', '*layers', 'tools']

const rightTools = ['*arrow', 'cross', '|', 'fp', '^track', '^tune', 'via', 'zone', 'hatch', '|', 'line', 'arc', 'rect', 'circle', 'poly', 'image', 'textT', 'textBox', '^dim', 'del', '|', '^origin', 'ruler']

const SideTools = ({ items }: { items: string[] }) => (
    <>
        {items.map((t, i) => t === '|'
            ? <SepH key={i} />
            : (
                <ToolBtn key={i} $active={t[0] === '*'} $corner={t[0] === '^'}>
                    <Icon n={t.replace(/^[*^]/, '')} />
                </ToolBtn>
            ))}
    </>
)

const layers: [string, string, string?, boolean?][] = [
    ['F.Cu', '#c83434', undefined, true], ['B.Cu', '#4d7fc4'], ['F.Adhesive', '#840084'], ['B.Adhesive', '#000084'],
    ['F.Paste', '#a39488'], ['B.Paste', '#00acb0'], ['F.Silkscreen', '#f2eda1', undefined, true], ['B.Silkscreen', '#e8b2a7'],
    ['F.Mask', '#6a3a7c', '#4a2660'], ['B.Mask', '#0f7a70', '#0a554e'], ['User.Drawings', '#c2c2c2'], ['User.Comments', '#5990de'],
    ['User.Eco1', '#b4dbd2'], ['User.Eco2', '#d8c852'], ['Edge.Cuts', '#d0d2cd', undefined, true], ['Margin', '#ff26e2'],
    ['F.Courtyard', '#ff26e2', undefined, true], ['B.Courtyard', '#26e9ff'], ['F.Fab', '#afafaf'], ['B.Fab', '#585d84'],
    ['User.1', '#c2c2c2'], ['User.2', '#5990de'], ['User.3', '#b4dbd2'], ['User.4', '#d8c852'], ['User.5', '#c2c2c2'],
    ['User.6', '#5990de'], ['User.7', '#b4dbd2'], ['User.8', '#d8c852'], ['User.9', '#e8b2a7', undefined, true],
]

const filters: [string, boolean, string, boolean][] = [
    ['All items', true, 'Locked items', false],
    ['Footprints', true, 'Text', true],
    ['Tracks', true, 'Vias', true],
    ['Pads', true, 'Graphics', true],
    ['Zones', true, 'Rule Areas', true],
    ['Dimensions', true, 'Other items', true],
]

const courtyard = 'Error: Courtyards overlap'
const mask = 'Error: Front solder mask aperture bridges items with different nets'
const drcRows: [string, boolean?, boolean?][] = [
    [courtyard, true], ['Footprint D4'], ['Footprint TP6'],
    [courtyard, true], ['Footprint TP7'], ['Footprint VR1'],
    [courtyard, true], ['Footprint VR1'], ['Footprint TP6'],
    ['Error: Board edge clearance violation (board setup constraints edge clearance 0,1500 mm; actual 0,0000 mm)', true, true],
    ['Segment on Edge.Cuts'], ['Pad B8 [unconnected-(J1-SBU2-PadB8)] of J1 on F.Cu'],
    [mask, true], ['Pad [<no net>] of FID1 on F.Cu'], ['Zone [GND] on F.Cu and B.Cu'],
    [mask, true], ['Pad [<no net>] of FID3 on F.Cu'], ['Zone [GND] on F.Cu and B.Cu'],
    [mask, true], ['Pad [<no net>] of FID2 on F.Cu'],
]

const PadText = styled.text`
font-family: "Noto Sans", sans-serif;
letter-spacing: 0;
`

type Lbl = { t: string; x: number; y: number; len: number; size: number; rot?: number; c?: string }

const L1 = ({ t, x, y, len, size, rot, c = '#f4f4f4' }: Lbl) => (
    <PadText
        x={x}
        y={y}
        fontSize={size}
        fill={c}
        textAnchor="middle"
        dominantBaseline="central"
        textLength={len}
        lengthAdjust="spacingAndGlyphs"
        transform={rot ? `rotate(${rot} ${x} ${y})` : undefined}
    >
        {t}
    </PadText>
)

const smallPads: [number, string, string, string][] = [
    [472, 'B8', 'x', '#c83434'],
    [532, 'A5', '/USB_CC1', '#00ff00'],
    [592, 'B7', '/USB_D-', '#00ff00'],
    [652, 'A6', '/USB_D+', '#00ff00'],
    [711, 'A7', '/USB_D-', '#00ff00'],
    [771, 'B6', '/USB_D+', '#00ff00'],
    [831, 'A8', 'x', '#c83434'],
    [891, 'B5', '/USB_CC2', '#00ff00'],
]

const yards: [number, number, string][] = [
    [259, 373, '#a0a0a0'], [354, 469, '#e01010'], [450, 530, '#c83434'], [510, 589, '#00d000'], [570, 649, '#00d000'],
    [629, 708, '#00d000'], [689, 768, '#00d000'], [749, 828, '#00d000'], [809, 888, '#b03030'], [869, 947, '#00d000'], [928, 1010, '#e01010'],
]

const ARROW = 'M0 0l26 4-14 8 31 15-14 4-3 13-18-31-5 14z'

const Board = () => {
    const dots: React.ReactNode[] = []
    for (let i = 0; i < 21; i++) {
        for (let j = 0; j < 11; j++) {
            dots.push(<rect key={`${i}-${j}`} x={54.5 + i * 75.9} y={166.5 + j * 76} width="2" height="2" fill="#9a9fa4" opacity=".75" />)
        }
    }
    return (
        <svg width="1576" height="874" viewBox="35 112 1576 874">
            {/* copper pour */}
            <path d="M50 112h303v3q0 14-14 14H64q-14 0-14-14z" fill="#4d545c" />
            <path d="M503 112v9q2 5 10 7c30 8 54 32 54 60c0 24-18 46-36 52q-10 4-11 14v26h120v706h971V112z" fill="#4d545c" />
            {/* silkscreen stripes under clearance */}
            <path d="M960 112h12v765h-12zM1416 112h12v249h-12zM1416 440l12-14v560h-12z" fill="#aeae8c" />
            <path d="M1568 548q0-6 6-6h37v12h-31v291h31v12h-37q-6 0-6-6zM1428 693h140v13h-140z" fill="#aeae8c" />
            <path d="M1611 575q-16 15-16 45t16 45zM1611 722q-16 18-16 48t16 45z" fill="#aeae8c" />
            <path d="M1078 823q3 20 20 20h140l19 19v18l25 41 10-16v-45l-16-37z" fill="#aeae8c" />
            {/* dark clearance */}
            <path d="M1060 112h264l40 52q4 6 4 12v144q0 5-4 9l-66 68H1000V156h25z" fill="#001023" />
            <path d="M1298 470l100-101q8-8 18-8h195v67h-160q-6 0-12 6L1298 565z" fill="#001023" />
            <path d="M639 823h241v40q0 14 16 14h361v22l25 22 76 50h253v15H639z" fill="#001023" />
            <circle cx="1660" cy="395" r="53" fill="none" stroke="#ff26e2" strokeWidth="6" />
            <circle cx="1660" cy="1010" r="53" fill="none" stroke="#ff26e2" strokeWidth="6" />
            <path d="M660 112h5v45h-5z" fill="#b060a0" />
            <path d="M660 823h5v163h-5z" fill="#ff26e2" />
            <path d="M860 112h61l-6 6q-5 5-14 5h-21q-9 0-14-5z" fill="#8a8a8a" />
            {/* stripes over clearance */}
            <path d="M960 877h12v109h-12zM1416 969h12v17h-12z" fill="#f1eb9f" />
            <path d="M1416 361h12v65l-12 14z" fill="#f1eb9f" />
            <path d="M1257 877l34 28-10 20-27-26zM1078 924h168l16 11q-12 11-27 11H1098q-20 0-20-22z" fill="#f1eb9f" />
            {/* red pour with vias */}
            <path d="M1095 112h197l54 54v153l-50 50L1054 156z" fill="#9a0510" />
            <path d="M1095 112h197l54 54v153l-50 50" fill="none" stroke="#ff0000" strokeWidth="1" />
            <path d="M1298 148l28-10M1298 210l48-32M1298 270l48-43M1298 327l48-29M1154 135l29-23M1223 144l34-32M1290 118l-40 22" stroke="#ff2020" strokeWidth="1" />
            {[[1118, 165], [1194, 165], [1270, 165], [1270, 243], [1270, 319]].map(([x, y]) => (
                <g key={`${x}${y}`}>
                    <circle cx={x} cy={y} r="36" fill="#ff0000" />
                    <circle cx={x} cy={y} r="16" fill="#d9a93a" />
                </g>
            ))}
            {/* green tracks */}
            <path d="M1611 385h-191l-122 112v37l130-126h183z" fill="#00ff00" />
            <path d="M633 899h622l90 87h-32l-67-62H633z" fill="#00ff00" />
            {/* vias below the dialog */}
            {[[704, 'USB_D+'], [824, 'USB_D-']].map(([x, t]) => (
                <g key={t as string}>
                    <circle cx={x as number} cy="828" r="37" fill="#00ff00" />
                    <circle cx={x as number} cy="833" r="16" fill="#d9a93a" />
                    <L1 t={t as string} x={x as number} y={831} len={58} size={17} c="#d8f0a0" />
                </g>
            ))}
            {dots}
            {/* pads */}
            <rect x="501.5" y="281" width="131.5" height="71" fill="#808080" />
            <path d="M501.5 377H633v6h4v60h-4v5H501.5z" fill="#ff0000" />
            <path d="M501.5 951H633v6h97l35 29H501.5z" fill="#ff0000" />
            {smallPads.map(([y, a, b, c]) => (
                <g key={a}>
                    <path d={`M501.5 ${y}H633v6h4v24h-4v6H501.5z`} fill={c} />
                    <L1 t={a} x={567} y={y + 7} len={18} size={18} />
                    <L1 t={b} x={567} y={y + 26.5} len={b === 'x' ? 9 : b.length > 7 ? 76 : 64} size={19} />
                </g>
            ))}
            <L1 t="B12" x={536.5} y={298} len={56} size={34} />
            <L1 t="GND" x={537} y={336} len={43} size={23} />
            <L1 t="A1" x={587} y={317} len={32} size={29} rot={-90} />
            <L1 t="GND" x={619} y={316} len={43} size={22} rot={-90} />
            <L1 t="B9" x={537} y={394} len={38} size={32} />
            <L1 t="/PWR_VBUS" x={537} y={424} len={65} size={15} />
            <L1 t="A4" x={587} y={412} len={32} size={29} rot={-90} />
            <L1 t="/PWR_VBUS" x={615} y={412} len={63} size={15} rot={-90} />
            <L1 t="B4" x={537} y={968} len={38} size={32} />
            <L1 t="A9" x={587} y={985} len={32} size={29} rot={-90} />
            <L1 t="/PWR_VBUS" x={615} y={985} len={63} size={15} rot={-90} />
            {/* courtyards */}
            {yards.map(([a, b, c]) => (
                <rect key={a} x="480" y={a} width="174" height={b - a} rx="25" fill="none" stroke={c} strokeWidth="1" />
            ))}
            <rect x="551" y="259" width="43" height="114" rx="21" fill="none" stroke="#a0a0a0" />
            <rect x="551" y="355" width="43" height="114" rx="21" fill="none" stroke="#e01010" />
            <rect x="551" y="928" width="43" height="114" rx="21" fill="none" stroke="#e01010" />
            {/* edge cuts */}
            <path d="M35 146.5h475c22 0 39 20 39 42c0 20-16 36-34 37h-4q-14 1-14 15v746" fill="none" stroke="#d0d2cd" strokeWidth="1" />
            <L1 t="/USB_CC1" x={1345} y={475} len={92} size={20} rot={-45} c="#c8ffc8" />
            <L1 t="/USB_CC2" x={912} y={908} len={83} size={19} c="#d8ffd8" />
            {/* crosshair */}
            <path d="M434 112v874M35 470.5h1576" stroke="#d8d8d8" strokeWidth="1" opacity=".85" />
            {/* markers */}
            <path d={ARROW} transform="translate(502 472)" fill="#ffb5a8" stroke="#a02020" strokeWidth=".8" />
            <path d={ARROW} transform="translate(201 691)" fill="#c8a83c" />
        </svg>
    )
}

const ti: Record<string, React.ReactNode> = {
    start: <path d="M2 5l8-1v7H2zM11 4l11-2v9H11zM2 12h8v7l-8-1zM11 12h11v9l-11-2z" fill="#fff" />,
    folder: <><path d="M2 5h8l2 2h10v14H2z" fill="#f5c242" /><path d="M2 9h20v12H2z" fill="#ffd96a" /><path d="M8 15h9v6H8z" fill="#2b88d8" /></>,
    bolt: <><path d="M16 1L6 13h5l-3 10 11-14h-5z" fill="#f28a1c" stroke="#fff" strokeWidth="1" /><path d="M4 8l3-4M20 16l-3 4" stroke="#ddd" strokeWidth="2" /></>,
    cloud: <><circle cx="12" cy="12" r="11" fill="#86b81c" /><ellipse cx="12" cy="12" rx="7" ry="8" fill="#e6f2c0" /><rect x="8" y="9" width="8" height="7" rx="1" fill="#86b81c" /></>,
    bulb: <><path d="M5 1h10l5 5v17H5z" fill="#ffa800" /><circle cx="12" cy="11" r="4" fill="#fff2c0" /><path d="M10 16h4v3h-4z" fill="#fff2c0" /></>,
    sd: <><rect x="1" y="1" width="22" height="22" rx="2" fill="#efefef" /><path d="M6 4h9v15H6z" fill="#333" /><circle cx="15" cy="16" r="3.5" fill="#efefef" stroke="#333" /></>,
    mpc: <><path d="M3 3l18-2 1 5-19 2z" fill="#222" /><rect x="3" y="8" width="18" height="15" fill="#eee" /><text x="12" y="20" textAnchor="middle" fontSize="10" fontWeight="700" fontFamily="Open Sans" fill="#2f62c8">321</text></>,
    eclipse: <><circle cx="12" cy="12" r="11" fill="#e8761c" /><circle cx="13" cy="12" r="10.5" fill="#2c2255" /><path d="M4 9h19M3 12h20M4 15h19" stroke="#fff" strokeWidth="1.4" /></>,
    shards: <><path d="M11 2l6 7-6 6-6-6z" fill="#e8563c" /><path d="M17 9l6 6-9 7-3-7z" fill="#72c43c" /><path d="M5 9l6 6-3 5-6-7z" fill="#f0a030" /><path d="M11 2l6 7 3-3z" fill="#4a90e8" /></>,
    net: <><rect x="11" y="1" width="9" height="9" fill="#c8c8d8" stroke="#223" /><rect x="13" y="3" width="5" height="4" fill="#1a2aa0" /><rect x="2" y="13" width="9" height="9" fill="#c8c8d8" stroke="#223" /><rect x="4" y="15" width="5" height="4" fill="#1a2aa0" /><path d="M13 9l-5 6 5-2-3 6" stroke="#ffd800" strokeWidth="1.6" fill="none" /></>,
    monitor: <><path d="M2 2l18 3v12L2 15z" fill="#8fa8c8" /><path d="M4 4l14 2.4v9L4 13z" fill="#2060b0" /><path d="M5 17l12 2v3H5z" fill="#b8c4d4" /><circle cx="18" cy="19" r="4.5" fill="#5aa02c" /></>,
    notepad: <><rect x="4" y="3" width="15" height="20" fill="#e0e8c8" stroke="#666" /><path d="M4 18h15v5H4z" fill="#5fa83c" /><path d="M8 8v7M11 10v5M14 9v6" stroke="#444" /><path d="M16 14L22 2" stroke="#d8a020" strokeWidth="2.4" /></>,
    ring: <><rect x="1" y="1" width="22" height="22" fill="#fff" /><circle cx="12" cy="12" r="9.5" fill="none" stroke="#7fc31c" strokeWidth="3" /><rect x="1" y="10" width="22" height="4" fill="#333" /></>,
    tv: <><rect x="1" y="1" width="22" height="22" rx="4" fill="#06122e" /><circle cx="12" cy="12" r="8.5" fill="#fff" /><path d="M5 12l4-3v2h6V9l4 3-4 3v-2H9v2z" fill="#0a3da8" /></>,
    prg: <><rect x="1" y="1" width="22" height="22" fill="#2fa0e8" /><text x="12" y="16" textAnchor="middle" fontSize="11" fontWeight="700" fontFamily="Open Sans" fill="#fff">Prg</text></>,
    vsc: <path d="M17 1l6 3v16l-6 3L7 14l-4 3-2-1V8l2-1 4 3zM17 7l-6 5 6 5z" fill="#1a8fe0" fillRule="evenodd" />,
    maxim: <><circle cx="12" cy="12" r="11" fill="#0da5a0" /><path d="M7 17V7l5 6 5-6v10" fill="none" stroke="#fff" strokeWidth="2.4" /></>,
    mcu: <><rect x="1" y="1" width="22" height="22" fill="#3a1c80" /><rect x="6" y="6" width="12" height="12" fill="#ddd" stroke="#999" /><rect x="9" y="9" width="6" height="6" fill="#6a4ac0" /><path d="M3 4h18M3 20h18M4 3v18M20 3v18" stroke="#bba" strokeDasharray="1 1.5" /></>,
    conn: <><path d="M4 6l7-4 8 10-6 5z" fill="#9a9a9a" /><path d="M14 14l7 8" stroke="#888" strokeWidth="2.5" /><path d="M7 6l4 5" stroke="#666" strokeWidth="1.5" /></>,
    tree: <><circle cx="12" cy="9" r="9" fill="#4d7a2c" /><circle cx="9" cy="8" r="1" fill="#d04020" /><circle cx="15" cy="6" r="1" fill="#d04020" /><circle cx="16" cy="12" r="1" fill="#d04020" /><path d="M11 14h2v8h-2zM3 23h18" stroke="#ddd" strokeWidth="1.5" /></>,
    wrench: <><rect x="1" y="1" width="22" height="22" rx="4" fill="#e4e4e4" /><path d="M6 19l9-10q-1-4 3-5l-1 3 2 2 3-1q-1 4-5 3l-9 10z" fill="#555" /></>,
    obs: <><circle cx="12" cy="12" r="11" fill="#2a2a2a" stroke="#ddd" /><circle cx="12" cy="6.5" r="3" fill="#ddd" /><circle cx="7" cy="15" r="3" fill="#ddd" /><circle cx="17" cy="15" r="3" fill="#ddd" /></>,
    pdf: <><rect x="1" y="1" width="22" height="22" rx="3" fill="#b01010" /><path d="M5 19c5-3 7-9 6-13-1-2 3 10 8 10-5 0-9 1-14 3z" fill="none" stroke="#fff" strokeWidth="1.6" /></>,
    sync: <><path d="M4 10a8 8 0 0 1 14-4l2-2v8h-8l3-3a5 5 0 0 0-8 1z" fill="#3ca83c" /><path d="M20 14a8 8 0 0 1-14 4l-2 2v-8h8l-3 3a5 5 0 0 0 8-1z" fill="#52c452" /></>,
    github: <><circle cx="12" cy="12" r="11" fill="#6e3d9c" /><circle cx="12" cy="11" r="5.5" fill="none" stroke="#fff" strokeWidth="2" /><path d="M8 6l1 2M16 6l-1 2M10 16v4M14 16v4" stroke="#fff" strokeWidth="2" /></>,
    bird: <><rect x="1" y="1" width="22" height="22" rx="2" fill="#2b2b2b" /><path d="M4 5l8 6 4-1 3 3-5 1-1 5-3-6z" fill="#c8a81c" /></>,
    brave: <><path d="M5 3l4-2h6l4 2 3 3-2 11-8 6-8-6L2 6z" fill="#f0401e" /><path d="M8 9l4 1 4-1-2 5 1 2-3 3-3-3 1-2z" fill="#fff" /></>,
    sheet: <><rect x="1" y="1" width="22" height="22" rx="3" fill="#13b04a" /><path d="M5 5h5v14H5zM12 5h7v14h-7z" fill="#fff" /><path d="M7 13l3-3 3 2 4-4" stroke="#13b04a" fill="none" /></>,
    swirl: <><rect x="1" y="1" width="22" height="22" fill="#d8e6de" /><path d="M1 15q10-10 22-7v6q-10-3-14 4z" fill="#3a6a4c" /><ellipse cx="13" cy="12" rx="5" ry="3" fill="none" stroke="#eee" /></>,
    term: <><rect x="1" y="3" width="22" height="18" fill="#3a3a3a" /><path d="M1 3h22v3H1z" fill="#999" /><path d="M4 10l5 3-5 3" fill="none" stroke="#fff" strokeWidth="1.6" /><path d="M11 17h6" stroke="#fff" strokeWidth="1.6" /></>,
    magwin: <><rect x="5" y="2" width="18" height="14" fill="#48a8f0" /><circle cx="7" cy="15" r="4.5" fill="#bcd" stroke="#777" /><path d="M4 18l-3 4" stroke="#c8a070" strokeWidth="2.4" /></>,
    torrent: <><circle cx="12" cy="12" r="11" fill="#78b020" /><text x="12" y="18" textAnchor="middle" fontSize="18" fontWeight="700" fontFamily="DejaVu Sans" fill="#fff">µ</text></>,
    chrome: <><circle cx="12" cy="12" r="11" fill="#dd4b39" /><path d="M12 12L2.5 6.5A11 11 0 0 0 12 23z" fill="#2d9e4a" /><path d="M12 12L23 9A11 11 0 0 1 12 23z" fill="#f8c42c" /><circle cx="12" cy="12" r="5" fill="#4a8af4" stroke="#fff" strokeWidth="1.6" /></>,
    kicad: <><rect x="1" y="1" width="22" height="22" rx="5" fill="#2a3da8" /><text x="11.5" y="18" textAnchor="middle" fontSize="15" fontWeight="700" fontFamily="Open Sans" fill="#fff">Ki</text><circle cx="17.5" cy="6" r="1.8" fill="#f08020" /></>,
}

const taskIcons: [string, boolean?, boolean?][] = [
    ['folder', true], ['bolt'], ['cloud'], ['bulb'], ['sd'], ['mpc'], ['eclipse'], ['shards'], ['net'], ['monitor'], ['notepad'],
    ['ring'], ['tv'], ['prg'], ['vsc'], ['maxim'], ['mcu'], ['conn'], ['tree'], ['wrench'], ['obs'], ['pdf'], ['sync'], ['github'],
    ['bird'], ['brave'], ['sheet'], ['swirl'], ['term'], ['magwin', true], ['torrent', true], ['chrome', true], ['kicad', true, true],
]

const TaskGlyph = ({ n }: { n: string }) => (
    <svg width="24" height="24" viewBox="0 0 24 24">{ti[n]}</svg>
)

const ComboChevron = () => <Chevron c="#555" s={10} />

export default function App() {
    return (
        <Root>
            <GlobalStyle />
            <TitleBar>
                <AppLogo>
                    <svg width="14" height="16" viewBox="0 0 14 16">
                        <rect width="14" height="16" rx="2" fill="#14812e" />
                        <path d="M0 5h5M8 0v6M3 16c0-5 5-5 11-6" stroke="#c4d86a" strokeWidth="1.2" fill="none" />
                        <rect x="1" y="8" width="3" height="3" fill="#f2a83a" />
                    </svg>
                </AppLogo>
                *U37AX_USB_PowerDelivery_TestBoard — PCB Editor
                <WinControls>
                    <WinControl><svg width="10" height="10" viewBox="0 0 10 10"><path d="M0 5h10" stroke="#888" /></svg></WinControl>
                    <WinControl><svg width="10" height="10" viewBox="0 0 10 10"><path d="M.5 2.5h7v7h-7zM2.5 2.5v-2h7v7h-2" fill="none" stroke="#888" /></svg></WinControl>
                    <WinControl><svg width="10" height="10" viewBox="0 0 10 10"><path d="M0 0l10 10M10 0L0 10" stroke="#888" /></svg></WinControl>
                </WinControls>
            </TitleBar>
            <MenuBar>
                <MenuItem $w={32}>File</MenuItem>
                <MenuItem $w={34}>Edit</MenuItem>
                <MenuItem $w={39}>View</MenuItem>
                <MenuItem $w={42}>Place</MenuItem>
                <MenuItem $w={45}>Route</MenuItem>
                <MenuItem $w={52}>Inspect</MenuItem>
                <MenuItem $w={41}>Tools</MenuItem>
                <MenuItem $w={75}>Preferences</MenuItem>
                <MenuItem $w={40}>Help</MenuItem>
            </MenuBar>
            <TopToolbar>
                {topTools.map((t, i) => t === '|'
                    ? <SepV key={i} />
                    : <ToolBtn key={i}><Icon n={t} /></ToolBtn>)}
            </TopToolbar>
            <ComboBar>
                <Combo $w={176}>Track: use netclass width<ComboChevron /></Combo>
                <ToggleBox><Icon n="routeBtn" /></ToggleBox>
                <BarSep />
                <Combo $w={253}>Via: use netclass sizes<ComboChevron /></Combo>
                <BarSep $r={6} />
                <Combo $w={136} $white><LayerSwatch />F.Cu (PgUp)<ComboChevron /></Combo>
                <PairBtn><svg width="26" height="23" viewBox="0 0 26 32" preserveAspectRatio="none">{icons.layerPair}</svg></PairBtn>
                <BarSep $r={7} />
                <Combo $w={167}>0,6350 mm (25,00 mils)<ComboChevron /></Combo>
                <BarSep />
                <Combo $w={96}>Zoom 35,00<ComboChevron /></Combo>
            </ComboBar>
            <Main>
                <SideToolbar $pad={1}><SideTools items={leftTools} /></SideToolbar>
                <CanvasPane><Board /></CanvasPane>
                <SideToolbar $pad={2}><SideTools items={rightTools} /></SideToolbar>
                <Sash />
                <RightPanel>
                    <PanelHead $h={20}>Appearance</PanelHead>
                    <PanelTabs>
                        <PanelTab $w={50} $on>Layers</PanelTab>
                        <PanelTab $w={50}>Objects</PanelTab>
                        <PanelTab $w={46}>Nets</PanelTab>
                    </PanelTabs>
                    <LayerBox>
                        <LayerList>
                            {layers.map(([name, c, c2, on], i) => (
                                <LayerRow key={name} $sel={i === 0}>
                                    <LayerMark $on={i === 0} />
                                    <Swatch $c={c} $c2={c2} />
                                    <EyeSlot><Eye on={on} /></EyeSlot>
                                    <LayerName>{name}</LayerName>
                                </LayerRow>
                            ))}
                        </LayerList>
                        <DisplayOptions><SmallArrow />Layer Display Options</DisplayOptions>
                    </LayerBox>
                    <PresetBox>
                        <PresetLabel>Presets (Ctrl+Tab):</PresetLabel>
                        <Combo>---<ComboChevron /></Combo>
                        <PresetGap />
                        <PresetLabel>Viewports (Shift+Tab):</PresetLabel>
                        <Combo>---<ComboChevron /></Combo>
                    </PresetBox>
                    <PanelHead $h={21}>Selection Filter</PanelHead>
                    <FilterGrid>
                        {filters.flatMap(([a, aOn, b, bOn]) => [
                            <Check key={a} on={aOn} label={a} />,
                            <Check key={b} on={bOn} label={b} />,
                        ])}
                    </FilterGrid>
                </RightPanel>
            </Main>
            <MessagePanel>
                <MsgCol $w={66}>Type<br />Marker</MsgCol>
                <MsgCol $w={568}>Violation<br />Board edge clearance violation (board setup constraints edge clearance 0,1500 mm; actual 0,0000 mm)</MsgCol>
                <MsgCol $w={71}>Severity<br />Error</MsgCol>
                <MsgCol $w={400}>Segment on Edge.Cuts<br />Pad B8 [unconnected-(J1-SBU2-PadB8)] of J1 on F.Cu</MsgCol>
            </MessagePanel>
            <StatusBar>
                <StatusCell $w={850} $pad={2}>File 'C:\Users\RBR\Desktop\2024_0620__U37AX_USB_PowerDelivery_Trigger\_autosave-U37AX_USB_PowerDelivery_TestBoard.kicad_pcb' saved.</StatusCell>
                <StatusCell $w={78}>Z 33,38</StatusCell>
                <StatusCell $w={159}>X 115,6450  Y 74,2950</StatusCell>
                <StatusCell $w={251}>dx 115,6450  dy 74,2950  dist 137,4537</StatusCell>
                <StatusCell $w={184}>grid 0,6350</StatusCell>
                <StatusCell $w={66}>mm</StatusCell>
                <StatusCell $w={174} />
            </StatusBar>
            <Taskbar>
                <StartBtn><TaskGlyph n="start" /></StartBtn>
                {taskIcons.map(([n, open, cur]) => (
                    <TaskIcon key={n} $open={open} $cur={cur}><TaskGlyph n={n} /></TaskIcon>
                ))}
                <Tray>
                    <TraySlot $w={24}><svg width="14" height="14" viewBox="0 0 14 14"><path d="M1 10l6-6 6 6" fill="none" stroke="#eee" strokeWidth="1.2" /></svg></TraySlot>
                    <TraySlot $w={26}><svg width="18" height="16" viewBox="0 0 18 16"><path d="M1 5h3l4-4v14l-4-4H1zM11 5q2 3 0 6M13 3q4 5 0 10" fill="none" stroke="#eee" /></svg></TraySlot>
                    <TraySlot $w={26}><svg width="16" height="16" viewBox="0 0 16 16"><path d="M2 14a12 12 0 0 1 12-12M5 14a9 9 0 0 1 9-9M8 14a6 6 0 0 1 6-6" fill="none" stroke="#999" /><circle cx="13" cy="13" r="1.6" fill="#eee" /></svg></TraySlot>
                    <TraySlot $w={28}>ENG</TraySlot>
                    <TraySlot $w={76}><span>22:10</span><span>24.06.2024</span></TraySlot>
                    <TraySlot $w={30}><svg width="17" height="17" viewBox="0 0 17 17"><path d="M1 1.5h15v11h-5l-2.500 3v-3H1z" fill="none" stroke="#eee" /></svg></TraySlot>
                </Tray>
            </Taskbar>
            <Dialog>
                <DialogTitle>
                    Design Rules Checker
                    <svg width="11" height="11" viewBox="0 0 11 11"><path d="M.5.5l10 10M10.5.5l-10 10" stroke="#222" /></svg>
                </DialogTitle>
                <OptionGrid>
                    <Check on label="Refill all zones before performing DRC" />
                    <Check label="Test for parity between PCB and schematic" />
                    <Check label="Report all errors for each track" />
                </OptionGrid>
                <TabRow>
                    <Tab $w={85} $on>Violations (7)</Tab>
                    <Tab $w={129}>Unconnected Items (3)</Tab>
                    <Tab $w={151}>Schematic Parity (not run)</Tab>
                    <Tab $w={96}>Ignored Tests (5)</Tab>
                </TabRow>
                <TabPane>
                    <Tree>
                        <TreeBody>
                            <TreeRows>
                                {drcRows.map(([t, head, sel], i) => (
                                    <TreeRow key={i} $head={head} $sel={sel}>
                                        {head && <Chevron c="#444" s={10} />}
                                        {t}
                                    </TreeRow>
                                ))}
                            </TreeRows>
                            <VScroll>
                                <ScrollArrowBox $top={6}><svg width="10" height="8" viewBox="0 0 10 8"><path d="M1 6l4-4 4 4" fill="none" stroke="#555" strokeWidth="1.4" /></svg></ScrollArrowBox>
                                <VThumb />
                                <ScrollArrowBox $bottom={6}><svg width="10" height="8" viewBox="0 0 10 8"><path d="M1 2l4 4 4-4" fill="none" stroke="#555" strokeWidth="1.4" /></svg></ScrollArrowBox>
                            </VScroll>
                        </TreeBody>
                        <HScroll>
                            <svg width="8" height="10" viewBox="0 0 8 10"><path d="M6 1L2 5l4 4" fill="none" stroke="#555" strokeWidth="1.4" /></svg>
                            <HThumb />
                            <svg width="8" height="10" viewBox="0 0 8 10"><path d="M2 1l4 4-4 4" fill="none" stroke="#555" strokeWidth="1.4" /></svg>
                        </HScroll>
                    </Tree>
                </TabPane>
                <ShowRow>
                    <ShowSlot $w={42}>Show:</ShowSlot>
                    <ShowSlot $w={82}><Check label="All" /></ShowSlot>
                    <ShowSlot $w={112}><Check on label="Errors" /><Badge $bg="#ff0000" $fg="#fff" $ml={9}>10</Badge></ShowSlot>
                    <ShowSlot $w={133}><Check label="Warnings" /><Badge $bg="#ffff00" $fg="#111" $ml={11}>14</Badge></ShowSlot>
                    <ShowSlot $w={100}><Check label="Exclusions" /></ShowSlot>
                    <DlgButton $w={73} $auto>Save...</DlgButton>
                </ShowRow>
                <ButtonRow>
                    <DlgButton $w={92}>Delete Marker</DlgButton>
                    <DlgButton $w={114}>Delete All Markers</DlgButton>
                    <DlgButton $w={72} $auto>Run DRC</DlgButton>
                    <DlgButton $w={72} $main>Close</DlgButton>
                </ButtonRow>
                <Grip>
                    <svg width="10" height="10" viewBox="0 0 10 10"><path d="M8 0h2v2H8zM4 4h2v2H4zM8 4h2v2H8zM0 8h2v2H0zM4 8h2v2H4zM8 8h2v2H8z" fill="#c8c8c8" /></svg>
                </Grip>
            </Dialog>
        </Root>
    )
}
